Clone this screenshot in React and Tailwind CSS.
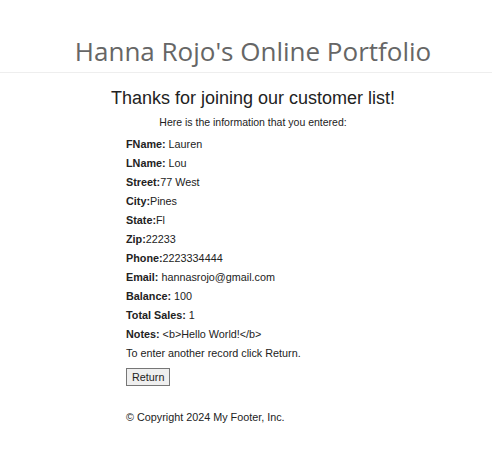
import React from 'react';

const FIELDS = [
  { label: 'FName:', value: ' Lauren' },
  { label: 'LName:', value: ' Lou' },
  { label: 'Street:', value: '77 West' },
  { label: 'City:', value: 'Pines' },
  { label: 'State:', value: 'Fl' },
  { label: 'Zip:', value: '22233' },
  { label: 'Phone:', value: '2223334444' },
  { label: 'Email:', value: ' hannasrojo@gmail.com' },
  { label: 'Balance:', value: ' 100' },
  { label: 'Total Sales:', value: ' 1' },
  { label: 'Notes:', value: ' <b>Hello World!</b>' },
];

export default function App() {
  return (
    <div className="min-h-screen bg-white text-[#222] font-['Liberation_Sans',Arial,sans-serif]">
      <header className="border-b border-[#eee] pl-[14px] pt-[35px] pb-[5px]">
        <h1 className="text-center text-[26px] leading-[32px] text-[#666] font-['Open_Sans',sans-serif]">
          Hanna Rojo's Online Portfolio
        </h1>
      </header>

      <main className="pt-[14px]">
        <div className="pl-[14px] text-center">
          <h2 className="text-[18px] leading-[22px] text-[#222]">Thanks for joining our customer list!</h2>
          <p className="mt-[6px] text-[10.5px] leading-[14px]">Here is the information that you entered:</p>
        </div>

        <div className="pl-[126px] pt-[6px] text-[10.8px] leading-[19px]">
          {FIELDS.map((f) => (
            <div key={f.label}>
              <b>{f.label}</b>
              {f.value}
            </div>
          ))}
          <div>To enter another record click Return.</div>
          <button className="mt-[5px] border border-[#767676] bg-[#efefef] px-[5px] text-[10.8px] leading-[16px]">
            Return
          </button>
          <p className="mt-[21px]">© Copyright 2024 My Footer, Inc.</p>
        </div>
      </main>
    </div>
  );
}
